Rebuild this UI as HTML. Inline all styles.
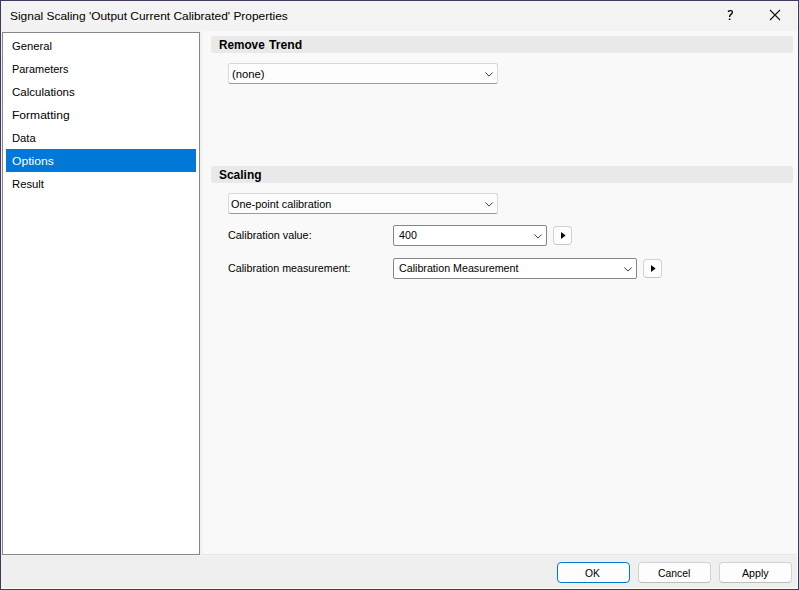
<!DOCTYPE html>
<html>
<head>
<meta charset="utf-8">
<title>Signal Scaling Properties</title>
<style>
html,body{margin:0;padding:0;}
body{width:799px;height:590px;overflow:hidden;background:#f9f9f9;font-family:"Liberation Sans",sans-serif;font-size:12px;color:#000;position:relative;}
.abs{position:absolute;}
#frame{left:0;top:0;width:797px;height:588px;border:1px solid #46375f;z-index:50;pointer-events:none;}
#frame2{left:1px;top:1px;width:795px;height:586px;border:1px solid #f0f0f0;border-top-color:#f5f5f5;border-right-color:#fbfbfb;border-bottom-color:#fbfbfb;z-index:49;pointer-events:none;}
#titlebar{left:0;top:0;width:799px;height:31px;background:#f3f3f3;}
#leftbg{left:0;top:31px;width:202px;height:524px;background:#f0f0f0;}
#content{left:202px;top:31px;width:597px;height:523px;background:#f9f9f9;}
#sep{left:201px;top:554px;width:598px;height:1px;background:#e5e5e5;}
#bottombar{left:0;top:555px;width:799px;height:35px;background:#efefef;border-top:1px solid #f3f3f3;box-sizing:border-box;}
#nav{left:2px;top:32px;width:196px;height:521px;border:1px solid #828790;background:#fff;}
.t{position:absolute;white-space:nowrap;line-height:1;transform-origin:0 0;display:block;}
.seg{font-size:11px;}
.tah{font-size:11px;}
.sel{left:6px;top:149px;width:190px;height:23px;background:#0078d7;}
.hdr{left:211px;width:582px;height:17px;background:#e9e9e9;border-radius:3px;}
.combo{height:19px;background:#fdfdfd;border:1px solid #d9d9d9;border-bottom-color:#9b9b9b;border-radius:2.5px;}
.combo.ed{border-color:#868686;background:#fff;border-radius:2px;}
.btn{height:19px;width:71px;background:#fdfdfd;border:1px solid #d2d2d2;border-bottom-color:#bdbdbd;border-radius:4px;}
.btn.def{border-color:#0078d4;}
.sbtn{width:17px;height:17px;background:#fdfdfd;border:1px solid #d2d2d2;border-bottom-color:#c4c4c4;border-radius:4px;}
svg{position:absolute;overflow:visible;}
</style>
</head>
<body>
<div class="abs" id="titlebar"></div>
<div class="abs" id="leftbg"></div>
<div class="abs" id="content"></div>
<div class="abs" style="left:200px;top:31px;width:1px;height:524px;background:#f3f3f3;"></div>
<div class="abs" style="left:201px;top:31px;width:1px;height:524px;background:#ececec;"></div>
<div class="abs" id="sep"></div>
<div class="abs" id="bottombar"></div>
<div class="abs" id="frame2"></div>
<div class="abs" id="frame"></div>

<!-- title -->
<span class="t seg" id="title" style="left:9.73px;top:11px;transform:scaleX(1.0846);">Signal Scaling 'Output Current Calibrated' Properties</span>
<svg class="abs" id="help" style="left:720px;top:5px;" width="20" height="20" viewBox="0 0 20 20"><path d="M7.9 6.6 Q9.4 5.5 11 5.7 Q12.6 6 12.4 7.4 Q12.2 8.5 10.8 9.6 Q9.6 10.6 9.6 11.9" stroke="#000" stroke-width="1.35" fill="none"/><rect x="8.8" y="13.4" width="1.7" height="1.7" rx="0.5" fill="#000"/></svg>
<svg class="abs" id="closex" style="left:770px;top:10px;" width="10" height="10" viewBox="0 0 10 10"><path d="M0 0 L10 10 M10 0 L0 10" stroke="#111" stroke-width="1.1" fill="none"/></svg>

<!-- nav -->
<div class="abs" id="nav"></div>
<div class="abs sel"></div>
<span class="t seg nv" style="left:12.22px;top:41px;transform:scaleX(1.0228);">General</span>
<span class="t seg nv" style="left:11.51px;top:64px;transform:scaleX(0.9922);">Parameters</span>
<span class="t seg nv" style="left:12.30px;top:87px;transform:scaleX(1.0469);">Calculations</span>
<span class="t seg nv" style="left:12.40px;top:110px;transform:scaleX(1.0972);">Formatting</span>
<span class="t seg nv" style="left:12.45px;top:133px;transform:scaleX(1.0200);">Data</span>
<span class="t seg nv" style="left:11.91px;top:156px;color:#fff;transform:scaleX(1.1066);">Options</span>
<span class="t seg nv" style="left:12.45px;top:179px;transform:scaleX(1.0250);">Result</span>

<!-- Remove Trend -->
<div class="abs hdr" style="top:36px;"></div>
<span class="t" id="h1a" style="left:219.45px;top:39px;font-weight:bold;font-size:12px;transform:scaleX(0.9784);">Remove</span>
<span class="t" id="h1b" style="left:269.25px;top:39px;font-weight:bold;font-size:12px;transform:scaleX(1.0156);">Trend</span>
<div class="abs combo" style="left:228px;top:63px;width:268px;"></div>
<span class="t tah" id="c1" style="left:232.0px;top:69px;transform:scaleX(1.0260);">(none)</span>
<svg class="abs chev" style="left:485px;top:71.5px;" width="8" height="5" viewBox="0 0 8 5"><path d="M0.4 0.5 L4 4.1 L7.6 0.5" stroke="#3c3c3c" stroke-width="1" fill="none"/></svg>

<!-- Scaling -->
<div class="abs hdr" style="top:166px;"></div>
<span class="t" id="h2" style="left:218.76px;top:169px;font-weight:bold;font-size:12px;transform:scaleX(0.9957);">Scaling</span>
<div class="abs combo" style="left:228px;top:193px;width:268px;"></div>
<span class="t tah" id="c2" style="left:231.30px;top:199px;transform:scaleX(0.9880);">One-point calibration</span>
<svg class="abs chev" style="left:485px;top:201.5px;" width="8" height="5" viewBox="0 0 8 5"><path d="M0.4 0.5 L4 4.1 L7.6 0.5" stroke="#3c3c3c" stroke-width="1" fill="none"/></svg>

<span class="t tah" id="l1" style="left:227.51px;top:230px;transform:scaleX(0.9840);">Calibration value:</span>
<div class="abs combo ed" style="left:393px;top:225px;width:152px;"></div>
<span class="t tah" id="c3" style="left:399.03px;top:230px;transform:scaleX(0.9726);">400</span>
<svg class="abs chev" style="left:534px;top:233.5px;" width="8" height="5" viewBox="0 0 8 5"><path d="M0.4 0.5 L4 4.1 L7.6 0.5" stroke="#3c3c3c" stroke-width="1" fill="none"/></svg>
<div class="abs sbtn" style="left:553px;top:226px;"></div>
<svg class="abs" style="left:560.5px;top:232px;" width="5" height="7" viewBox="0 0 5 7"><path d="M0 0 L4.6 3.5 L0 7 Z" fill="#000"/></svg>

<span class="t tah" id="l2" style="left:228.20px;top:263px;transform:scaleX(0.9730);">Calibration measurement:</span>
<div class="abs combo ed" style="left:393px;top:258px;width:242px;"></div>
<span class="t tah" id="c4" style="left:398.70px;top:263px;transform:scaleX(0.9718);">Calibration Measurement</span>
<svg class="abs chev" style="left:624px;top:266.5px;" width="8" height="5" viewBox="0 0 8 5"><path d="M0.4 0.5 L4 4.1 L7.6 0.5" stroke="#3c3c3c" stroke-width="1" fill="none"/></svg>
<div class="abs sbtn" style="left:643px;top:259px;"></div>
<svg class="abs" style="left:650.5px;top:265px;" width="5" height="7" viewBox="0 0 5 7"><path d="M0 0 L4.6 3.5 L0 7 Z" fill="#000"/></svg>

<!-- buttons -->
<div class="abs btn def" style="left:557px;top:562px;"></div>
<div class="abs btn" style="left:638px;top:562px;"></div>
<div class="abs btn" style="left:719px;top:562px;"></div>
<span class="t seg" id="b1" style="left:584.95px;top:568px;transform:scaleX(0.9371);">OK</span>
<span class="t seg" id="b2" style="left:657.80px;top:568px;transform:scaleX(0.9450);">Cancel</span>
<span class="t seg" id="b3" style="left:741.60px;top:568px;transform:scaleX(0.9700);">Apply</span>
</body>
</html>
